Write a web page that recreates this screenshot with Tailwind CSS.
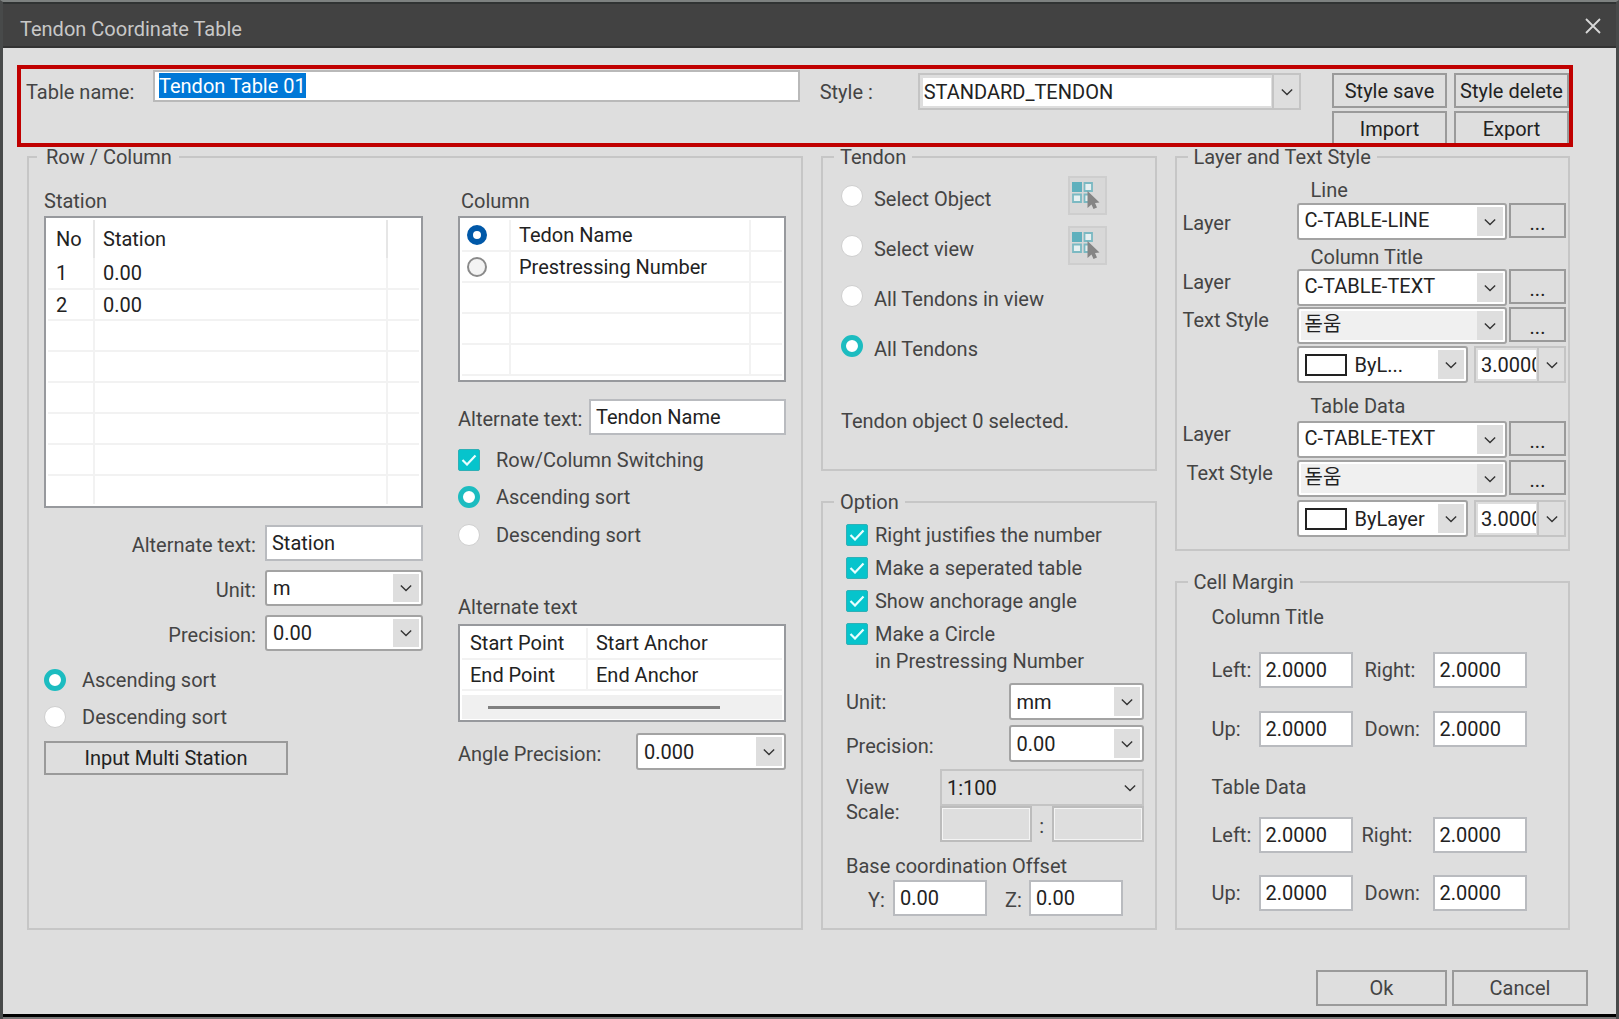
<!DOCTYPE html>
<html lang="en">
<head>
    <meta charset="UTF-8">
    <meta name="viewport" content="width=device-width, initial-scale=1.0">
    <title>Tendon Coordinate Table</title>
    <script src="https://cdn.jsdelivr.net/npm/@tailwindcss/browser@4"></script>
    <style>
        body { font-family: Roboto, 'Noto Sans CJK KR', sans-serif; }
        table { border-collapse: collapse; }
    </style>
</head>
<body class="bg-[#dedede] text-[20px] leading-6 text-[#444]">
    <svg class="hidden">
        <symbol id="chevron" viewBox="0 0 14 8"><path d="M1 1l6 6 6-6" fill="none" stroke="#333" stroke-width="1.6"/></symbol>
        <symbol id="check" viewBox="0 0 16 12"><path d="M1.5 6l4.5 4.5L14.5 1.5" fill="none" stroke="#e8ffff" stroke-width="2.2"/></symbol>
        <symbol id="pick" viewBox="0 0 30 30">
            <rect x="0" y="1" width="10" height="10" fill="#5fb0bd"/>
            <path d="M12.500 2h7.500v8h-7.500zM1 13.500h8v7.500H1zM16 13.500h-3.500v7.500h4" fill="#e6f0f1" stroke="#7bb9c2" stroke-width="1.8"/>
            <path d="M15.500 10v17l4-3.500 2 4.500 3.500-1.500-2-4.500 4.500-.5z" fill="#858585"/>
        </symbol>
    </svg>

    <div class="min-h-screen flex flex-col border-x-3 border-t-2 border-x-[#484a4a] border-t-[#7d8180]">
        <!-- Title bar -->
        <header class="h-[46px] shrink-0 flex items-center justify-between bg-[#424242] border-y-2 border-t-[#303333] border-b-[#333] pl-[17px] pr-[15px] pt-2">
            <h1 class="text-[#c8c8c8]">Tendon Coordinate Table</h1>
            <button aria-label="Close" class="-mt-1.5">
                <svg class="size-4" viewBox="0 0 16 16"><path d="M1 1l14 14M15 1L1 15" stroke="#d8d8d8" stroke-width="1.8"/></svg>
            </button>
        </header>

        <main class="flex-1 pt-[17px] pl-[14px] pr-[28px] border-b-3 border-black">
            <!-- Table name and style -->
            <section class="mr-[15px] h-[82px] overflow-hidden border-4 border-[#c00000] flex items-start pl-[5px] pt-px">
                <label for="tableName" class="w-[127px] pt-[10px]">Table name:</label>
                <div class="flex-638 h-8 bg-white border-2 border-[#b9b9b9] flex items-start pl-1">
                    <input id="tableName" value="Tendon Table 01" class="field-sizing-content h-[25px] mt-px bg-[#0078d7] text-white outline-none">
                </div>
                <label for="style" class="w-[118px] pl-5 pt-[10px]">Style :</label>
                <div class="relative flex-348 h-[37px] mt-[3px] border-2 border-[#c4c4c4] p-[3px] pr-[28px]">
                    <select id="style" class="appearance-none block w-full h-[28px] bg-white text-[#222] pl-px"><option>STANDARD_TENDON</option></select>
                    <span class="absolute right-0 inset-y-0 w-[27px] border-l-2 border-[#c4c4c4] grid place-items-center pointer-events-none"><svg class="w-3 h-2"><use href="#chevron"/></svg></span>
                </div>
                <div class="ml-[31px] mt-[3px] grid grid-cols-[115px_115px] gap-x-[7px] gap-y-[3px] text-[#222] whitespace-nowrap">
                    <button class="h-[35px] border-2 border-[#9a9a9a]">Style save</button>
                    <button class="h-[35px] border-2 border-[#9a9a9a]">Style delete</button>
                    <button class="h-[35px] border-2 border-[#9a9a9a]">Import</button>
                    <button class="h-[35px] border-2 border-[#9a9a9a]">Export</button>
                </div>
            </section>

            <div class="ml-[10px] mr-[18px] grid grid-cols-[minmax(0,777fr)_minmax(0,336fr)_minmax(0,396fr)] gap-[18px]">
                <!-- Row / Column -->
                <fieldset class="min-w-0 border-2 border-[#c6c6c6] px-[15px] grid grid-cols-[minmax(0,379fr)_minmax(0,328fr)] gap-[35px]">
                    <legend class="-ml-[7px] pl-[9px] pr-[7px] leading-5">Row / Column</legend>
                    <div class="pt-[22px]">
                        <h2>Station</h2>
                        <div class="mt-[3px] h-[292px] bg-white border-2 border-[#97999d] p-[2px] overflow-hidden text-[#222]">
                            <table class="w-full table-fixed text-left">
                                <colgroup><col class="w-[46px]"><col><col class="w-[32px]"></colgroup>
                                <tr class="h-[38px]"><th class="font-normal pl-2 border-r-2 border-[#e6e6e6]">No</th><th class="font-normal pl-2 border-r-2 border-[#e6e6e6]">Station</th><th></th></tr>
                                <tr class="h-[31px] border-b-2 border-[#f2f2f2]"><td class="pl-2 border-r-2 border-[#f2f2f2]">1</td><td class="pl-2 border-r-2 border-[#f2f2f2]">0.00</td><td></td></tr>
                                <tr class="h-[31px] border-b-2 border-[#f2f2f2]"><td class="pl-2 border-r-2 border-[#f2f2f2]">2</td><td class="pl-2 border-r-2 border-[#f2f2f2]">0.00</td><td></td></tr>
                                <tr class="h-[31px] border-b-2 border-[#f2f2f2]"><td class="border-r-2 border-[#f2f2f2]"></td><td class="border-r-2 border-[#f2f2f2]"></td><td></td></tr>
                                <tr class="h-[31px] border-b-2 border-[#f2f2f2]"><td class="border-r-2 border-[#f2f2f2]"></td><td class="border-r-2 border-[#f2f2f2]"></td><td></td></tr>
                                <tr class="h-[31px] border-b-2 border-[#f2f2f2]"><td class="border-r-2 border-[#f2f2f2]"></td><td class="border-r-2 border-[#f2f2f2]"></td><td></td></tr>
                                <tr class="h-[31px] border-b-2 border-[#f2f2f2]"><td class="border-r-2 border-[#f2f2f2]"></td><td class="border-r-2 border-[#f2f2f2]"></td><td></td></tr>
                                <tr class="h-[31px] border-b-2 border-[#f2f2f2]"><td class="border-r-2 border-[#f2f2f2]"></td><td class="border-r-2 border-[#f2f2f2]"></td><td></td></tr>
                                <tr class="h-[29px]"><td class="border-r-2 border-[#f2f2f2]"></td><td class="border-r-2 border-[#f2f2f2]"></td><td></td></tr>
                            </table>
                        </div>
                        <div class="mt-[17px] grid grid-cols-[1fr_158px] gap-x-[9px] gap-y-[9px] items-center">
                            <label for="stationAlt" class="text-right pt-1">Alternate text:</label>
                            <input id="stationAlt" value="Station" class="w-full h-9 bg-white border-2 border-[#b9bbbf] px-[5px] text-[#222]">
                            <label for="stationUnit" class="text-right pt-1">Unit:</label>
                            <div class="relative">
                                <select id="stationUnit" class="appearance-none block w-full h-9 bg-white border-2 border-[#a3a3a3] rounded-[3px] pl-[6px] text-[#222]"><option>m</option></select>
                                <span class="absolute right-1 inset-y-1 w-[26px] bg-[#dedede] grid place-items-center pointer-events-none"><svg class="w-3 h-2"><use href="#chevron"/></svg></span>
                            </div>
                            <label for="stationPrecision" class="text-right pt-1">Precision:</label>
                            <div class="relative">
                                <select id="stationPrecision" class="appearance-none block w-full h-9 bg-white border-2 border-[#a3a3a3] rounded-[3px] pl-[6px] text-[#222]"><option>0.00</option></select>
                                <span class="absolute right-1 inset-y-1 w-[26px] bg-[#dedede] grid place-items-center pointer-events-none"><svg class="w-3 h-2"><use href="#chevron"/></svg></span>
                            </div>
                        </div>
                        <label class="mt-[17px] flex items-center gap-4"><input type="radio" name="rowSort" checked class="appearance-none size-[22px] rounded-full bg-white border border-[#cfcfcf] checked:border-5 checked:border-[#1cbcc0]">Ascending sort</label>
                        <label class="mt-[13px] flex items-center gap-4"><input type="radio" name="rowSort" class="appearance-none size-[22px] rounded-full bg-white border border-[#cfcfcf] checked:border-5 checked:border-[#1cbcc0]">Descending sort</label>
                        <button class="mt-3 w-[244px] h-[34px] border-2 border-[#9a9a9a] text-[#222]">Input Multi Station</button>
                    </div>

                    <div class="pt-[22px]">
                        <h2 class="pl-[3px]">Column</h2>
                        <div class="mt-[3px] h-[166px] bg-white border-2 border-[#97999d] p-[2px] overflow-hidden text-[#222]">
                            <table class="w-full table-fixed">
                                <colgroup><col class="w-[48px]"><col><col class="w-[32px]"></colgroup>
                                <tr class="h-[31px] border-b-2 border-[#f2f2f2]"><td class="pl-[5px] border-r-2 border-[#f2f2f2]"><input type="radio" name="column" id="colName" checked class="appearance-none block size-5 rounded-full bg-white border-2 border-[#8a8a8a] checked:border-6 checked:border-[#0058a8]"></td><td class="pl-2 border-r-2 border-[#f2f2f2]"><label for="colName">Tedon Name</label></td><td></td></tr>
                                <tr class="h-[31px] border-b-2 border-[#f2f2f2]"><td class="pl-[5px] border-r-2 border-[#f2f2f2]"><input type="radio" name="column" id="colNumber" class="appearance-none block size-5 rounded-full bg-[#f3f3f3] border-2 border-[#8a8a8a] checked:border-6 checked:border-[#0058a8]"></td><td class="pl-2 border-r-2 border-[#f2f2f2]"><label for="colNumber">Prestressing Number</label></td><td></td></tr>
                                <tr class="h-[31px] border-b-2 border-[#f2f2f2]"><td class="border-r-2 border-[#f2f2f2]"></td><td class="border-r-2 border-[#f2f2f2]"></td><td></td></tr>
                                <tr class="h-[31px] border-b-2 border-[#f2f2f2]"><td class="border-r-2 border-[#f2f2f2]"></td><td class="border-r-2 border-[#f2f2f2]"></td><td></td></tr>
                                <tr class="h-[31px] border-b-2 border-[#f2f2f2]"><td class="border-r-2 border-[#f2f2f2]"></td><td class="border-r-2 border-[#f2f2f2]"></td><td></td></tr>
                            </table>
                        </div>
                        <div class="mt-[17px] flex items-center">
                            <label for="columnAlt" class="w-[131px] shrink-0 pt-1">Alternate text:</label>
                            <input id="columnAlt" value="Tendon Name" class="flex-1 min-w-0 h-9 bg-white border-2 border-[#b9bbbf] px-[5px] text-[#222]">
                        </div>
                        <label class="mt-[13px] flex items-center gap-4">
                            <span class="grid place-items-center"><input type="checkbox" checked class="[grid-area:1/1] appearance-none size-[22px] rounded-[2px] bg-[#06c4cc] border border-[#2fb0b6]"><svg class="[grid-area:1/1] w-4 h-3"><use href="#check"/></svg></span>Row/Column Switching
                        </label>
                        <label class="mt-[13px] flex items-center gap-4"><input type="radio" name="colSort" checked class="appearance-none size-[22px] rounded-full bg-white border border-[#cfcfcf] checked:border-5 checked:border-[#1cbcc0]">Ascending sort</label>
                        <label class="mt-[14px] flex items-center gap-4"><input type="radio" name="colSort" class="appearance-none size-[22px] rounded-full bg-white border border-[#cfcfcf] checked:border-5 checked:border-[#1cbcc0]">Descending sort</label>
                        <h2 class="mt-12">Alternate text</h2>
                        <div class="mt-[5px] h-[98px] bg-white border-2 border-[#97999d] p-[2px] text-[#222]">
                            <table class="w-full table-fixed">
                                <colgroup><col class="w-[125px]"><col></colgroup>
                                <tr class="h-[31px] border-b-2 border-[#f2f2f2]"><td class="pl-2 border-r-2 border-[#f2f2f2]">Start Point</td><td class="pl-2">Start Anchor</td></tr>
                                <tr class="h-[31px] border-b-2 border-[#f2f2f2]"><td class="pl-2 border-r-2 border-[#f2f2f2]">End Point</td><td class="pl-2">End Anchor</td></tr>
                            </table>
                            <div class="mt-1 h-6 bg-[#f0f0f0] flex items-center pl-[26px]"><div class="w-[232px] h-[3px] bg-[#808080]"></div></div>
                        </div>
                        <div class="mt-[11px] flex items-center justify-between">
                            <label for="anglePrecision" class="pt-1">Angle Precision:</label>
                            <div class="relative w-[150px]">
                                <select id="anglePrecision" class="appearance-none block w-full h-[37px] bg-white border-2 border-[#a3a3a3] rounded-[3px] pl-[6px] text-[#222]"><option>0.000</option></select>
                                <span class="absolute right-1 inset-y-1 w-[26px] bg-[#dedede] grid place-items-center pointer-events-none"><svg class="w-3 h-2"><use href="#chevron"/></svg></span>
                            </div>
                        </div>
                    </div>
                </fieldset>

                <div class="flex flex-col gap-[21px]">
                    <!-- Tendon -->
                    <fieldset class="min-w-0 border-2 border-[#c6c6c6] pl-[18px] pr-[48px] pt-[9px] pb-9">
                        <legend class="-ml-[7px] px-[6px] leading-5">Tendon</legend>
                        <div class="grid auto-rows-[39px] gap-[11px]">
                            <div class="flex items-center justify-between">
                                <label class="flex items-center gap-[11px]"><input type="radio" name="target" class="appearance-none size-[22px] rounded-full bg-white border border-[#cfcfcf] checked:border-5 checked:border-[#1cbcc0]"><span class="pt-[6px]">Select Object</span></label>
                                <button aria-label="Pick objects" class="size-[39px] bg-[#d8d8d8] border-2 border-[#cecece] grid place-items-center"><svg class="size-[30px]"><use href="#pick"/></svg></button>
                            </div>
                            <div class="flex items-center justify-between">
                                <label class="flex items-center gap-[11px]"><input type="radio" name="target" class="appearance-none size-[22px] rounded-full bg-white border border-[#cfcfcf] checked:border-5 checked:border-[#1cbcc0]"><span class="pt-[6px]">Select view</span></label>
                                <button aria-label="Pick view" class="size-[39px] bg-[#d8d8d8] border-2 border-[#cecece] grid place-items-center"><svg class="size-[30px]"><use href="#pick"/></svg></button>
                            </div>
                            <label class="flex items-center gap-[11px]"><input type="radio" name="target" class="appearance-none size-[22px] rounded-full bg-white border border-[#cfcfcf] checked:border-5 checked:border-[#1cbcc0]"><span class="pt-[6px]">All Tendons in view</span></label>
                            <label class="flex items-center gap-[11px]"><input type="radio" name="target" checked class="appearance-none size-[22px] rounded-full bg-white border border-[#cfcfcf] checked:border-5 checked:border-[#1cbcc0]"><span class="pt-[6px]">All Tendons</span></label>
                        </div>
                        <p class="mt-11 whitespace-nowrap">Tendon object 0 selected.</p>
                    </fieldset>

                    <!-- Option -->
                    <fieldset class="min-w-0 flex-1 border-2 border-[#c6c6c6] pl-[23px] pr-[11px] pt-[11px] pb-3">
                        <legend class="-ml-3 px-[6px] leading-5">Option</legend>
                        <div class="grid auto-rows-[23px] gap-[10px]">
                            <label class="flex items-center gap-[7px]"><span class="grid place-items-center"><input type="checkbox" checked class="[grid-area:1/1] appearance-none size-[22px] rounded-[2px] bg-[#06c4cc] border border-[#2fb0b6]"><svg class="[grid-area:1/1] w-4 h-3"><use href="#check"/></svg></span>Right justifies the number</label>
                            <label class="flex items-center gap-[7px]"><span class="grid place-items-center"><input type="checkbox" checked class="[grid-area:1/1] appearance-none size-[22px] rounded-[2px] bg-[#06c4cc] border border-[#2fb0b6]"><svg class="[grid-area:1/1] w-4 h-3"><use href="#check"/></svg></span>Make a seperated table</label>
                            <label class="flex items-center gap-[7px]"><span class="grid place-items-center"><input type="checkbox" checked class="[grid-area:1/1] appearance-none size-[22px] rounded-[2px] bg-[#06c4cc] border border-[#2fb0b6]"><svg class="[grid-area:1/1] w-4 h-3"><use href="#check"/></svg></span>Show anchorage angle</label>
                            <label class="flex items-center gap-[7px]"><span class="grid place-items-center"><input id="circle" type="checkbox" checked class="[grid-area:1/1] appearance-none size-[22px] rounded-[2px] bg-[#06c4cc] border border-[#2fb0b6]"><svg class="[grid-area:1/1] w-4 h-3"><use href="#check"/></svg></span>Make a Circle</label>
                        </div>
                        <label for="circle" class="block mt-1 pl-[29px]">in Prestressing Number</label>
                        <div class="mt-[10px] flex items-center justify-between">
                            <label for="optUnit">Unit:</label>
                            <div class="relative w-[135px]">
                                <select id="optUnit" class="appearance-none block w-full h-[37px] bg-white border-2 border-[#a3a3a3] rounded-[3px] pl-[6px] text-[#222]"><option>mm</option></select>
                                <span class="absolute right-1 inset-y-1 w-[26px] bg-[#dedede] grid place-items-center pointer-events-none"><svg class="w-3 h-2"><use href="#chevron"/></svg></span>
                            </div>
                        </div>
                        <div class="mt-[5px] flex items-center justify-between">
                            <label for="optPrecision" class="pt-1">Precision:</label>
                            <div class="relative w-[135px]">
                                <select id="optPrecision" class="appearance-none block w-full h-[37px] bg-white border-2 border-[#a3a3a3] rounded-[3px] pl-[6px] text-[#222]"><option>0.00</option></select>
                                <span class="absolute right-1 inset-y-1 w-[26px] bg-[#dedede] grid place-items-center pointer-events-none"><svg class="w-3 h-2"><use href="#chevron"/></svg></span>
                            </div>
                        </div>
                        <div class="mt-[7px] flex">
                            <label for="viewScale" class="w-[94px] pt-[6px] leading-[25px]">View<br>Scale:</label>
                            <div class="flex-1 min-w-0">
                                <div class="relative">
                                    <select id="viewScale" class="appearance-none block w-full h-[37px] border-2 border-[#c4c4c4] pl-[5px] text-[#222]"><option>1:100</option></select>
                                    <span class="absolute right-2 inset-y-0 grid place-items-center pointer-events-none"><svg class="w-3 h-2"><use href="#chevron"/></svg></span>
                                </div>
                                <div class="flex items-center">
                                    <input aria-label="Scale numerator" class="flex-1 min-w-0 h-9 border-2 border-[#bcbcbc] shadow-[inset_0_0_0_1px_#f4f4f4]">
                                    <span class="w-5 text-center pt-1">:</span>
                                    <input aria-label="Scale denominator" class="flex-1 min-w-0 h-9 border-2 border-[#bcbcbc] shadow-[inset_0_0_0_1px_#f4f4f4]">
                                </div>
                            </div>
                        </div>
                        <p class="mt-3">Base coordination Offset</p>
                        <div class="mt-[2px] pl-[22px] flex items-center">
                            <label for="offY" class="w-[25px] pt-1">Y:</label>
                            <input id="offY" value="0.00" class="w-[94px] h-9 bg-white border-2 border-[#b9bbbf] px-[5px] text-[#222]">
                            <label for="offZ" class="w-[42px] pl-[18px] pt-1">Z:</label>
                            <input id="offZ" value="0.00" class="w-[94px] h-9 bg-white border-2 border-[#b9bbbf] px-[5px] text-[#222]">
                        </div>
                    </fieldset>
                </div>

                <div class="flex flex-col gap-[21px]">
                    <!-- Layer and Text Style -->
                    <fieldset class="min-w-0 border-2 border-[#c6c6c6] pl-[6px] pr-[2px] pt-[11px] pb-3">
                        <legend class="ml-[5px] px-[6px] leading-5">Layer and Text Style</legend>
                        <h3 class="pl-[128px]">Line</h3>
                        <div class="mt-px flex gap-[2px]">
                            <label for="lineLayer" class="w-[112px] pt-2">Layer</label>
                            <div class="relative flex-1">
                                <select id="lineLayer" class="appearance-none block w-full h-[37px] bg-white border-2 border-[#a3a3a3] rounded-[3px] pl-[6px] pb-1 text-[#222]"><option>C-TABLE-LINE</option></select>
                                <span class="absolute right-1 inset-y-1 w-[26px] bg-[#dedede] grid place-items-center pointer-events-none"><svg class="w-3 h-2"><use href="#chevron"/></svg></span>
                            </div>
                            <button class="w-[57px] h-[35px] border-2 border-[#9a9a9a] text-[#222] pt-1">...</button>
                        </div>
                        <h3 class="mt-[5px] pl-[128px]">Column Title</h3>
                        <div class="flex gap-[2px]">
                            <label for="titleLayer" class="w-[112px] pt-px">Layer</label>
                            <div class="relative flex-1">
                                <select id="titleLayer" class="appearance-none block w-full h-[37px] bg-white border-2 border-[#a3a3a3] rounded-[3px] pl-[6px] pb-1 text-[#222]"><option>C-TABLE-TEXT</option></select>
                                <span class="absolute right-1 inset-y-1 w-[26px] bg-[#dedede] grid place-items-center pointer-events-none"><svg class="w-3 h-2"><use href="#chevron"/></svg></span>
                            </div>
                            <button class="w-[57px] h-[35px] border-2 border-[#9a9a9a] text-[#222] pt-1">...</button>
                        </div>
                        <div class="mt-px flex gap-[2px]">
                            <label for="titleStyle" class="w-[112px] pt-px">Text Style</label>
                            <div class="relative flex-1">
                                <select id="titleStyle" class="appearance-none block w-full h-[37px] bg-[#f0f0f0] border-2 border-[#a3a3a3] rounded-[3px] pl-[6px] pb-1 text-[#222] shadow-[inset_0_0_0_2px_white]"><option>돋움</option></select>
                                <span class="absolute right-1 inset-y-1 w-[26px] bg-[#dedede] grid place-items-center pointer-events-none"><svg class="w-3 h-2"><use href="#chevron"/></svg></span>
                            </div>
                            <button class="w-[57px] h-[35px] border-2 border-[#9a9a9a] text-[#222] pt-1">...</button>
                        </div>
                        <div class="mt-[2px] pl-[114px] flex gap-[6px]">
                            <div class="relative flex-1">
                                <select aria-label="Column title colour" class="appearance-none block w-full h-[37px] bg-white border-2 border-[#a3a3a3] rounded-[3px] pl-[56px] text-[#222]"><option>ByL...</option></select>
                                <span class="absolute left-2 top-2 w-[42px] h-[22px] border-2 border-[#222] pointer-events-none"></span>
                                <span class="absolute right-1 inset-y-1 w-[26px] bg-[#dedede] grid place-items-center pointer-events-none"><svg class="w-3 h-2"><use href="#chevron"/></svg></span>
                            </div>
                            <div class="relative w-[92px] border-2 border-[#c4c4c4] p-[2px] pr-[28px]">
                                <input aria-label="Column title height" value="3.0000" class="block w-full h-[29px] bg-white pl-[3px] text-[#222]">
                                <span class="absolute right-0 inset-y-0 w-[27px] border-l-2 border-[#c4c4c4] grid place-items-center pointer-events-none"><svg class="w-3 h-2"><use href="#chevron"/></svg></span>
                            </div>
                        </div>
                        <h3 class="mt-[11px] pl-[128px]">Table Data</h3>
                        <div class="mt-[3px] flex gap-[2px]">
                            <label for="dataLayer" class="w-[112px] pt-px">Layer</label>
                            <div class="relative flex-1">
                                <select id="dataLayer" class="appearance-none block w-full h-[37px] bg-white border-2 border-[#a3a3a3] rounded-[3px] pl-[6px] pb-1 text-[#222]"><option>C-TABLE-TEXT</option></select>
                                <span class="absolute right-1 inset-y-1 w-[26px] bg-[#dedede] grid place-items-center pointer-events-none"><svg class="w-3 h-2"><use href="#chevron"/></svg></span>
                            </div>
                            <button class="w-[57px] h-[35px] border-2 border-[#9a9a9a] text-[#222] pt-1">...</button>
                        </div>
                        <div class="mt-[2px] flex gap-[2px]">
                            <label for="dataStyle" class="w-[112px] pl-1 pt-px">Text Style</label>
                            <div class="relative flex-1">
                                <select id="dataStyle" class="appearance-none block w-full h-[37px] bg-[#f0f0f0] border-2 border-[#a3a3a3] rounded-[3px] pl-[6px] pb-1 text-[#222] shadow-[inset_0_0_0_2px_white]"><option>돋움</option></select>
                                <span class="absolute right-1 inset-y-1 w-[26px] bg-[#dedede] grid place-items-center pointer-events-none"><svg class="w-3 h-2"><use href="#chevron"/></svg></span>
                            </div>
                            <button class="w-[57px] h-[35px] border-2 border-[#9a9a9a] text-[#222] pt-1">...</button>
                        </div>
                        <div class="mt-[3px] pl-[114px] flex gap-[6px]">
                            <div class="relative flex-1">
                                <select aria-label="Table data colour" class="appearance-none block w-full h-[37px] bg-white border-2 border-[#a3a3a3] rounded-[3px] pl-[56px] text-[#222]"><option>ByLayer</option></select>
                                <span class="absolute left-2 top-2 w-[42px] h-[22px] border-2 border-[#222] pointer-events-none"></span>
                                <span class="absolute right-1 inset-y-1 w-[26px] bg-[#dedede] grid place-items-center pointer-events-none"><svg class="w-3 h-2"><use href="#chevron"/></svg></span>
                            </div>
                            <div class="relative w-[92px] border-2 border-[#c4c4c4] p-[2px] pr-[28px]">
                                <input aria-label="Table data height" value="3.0000" class="block w-full h-[29px] bg-white pl-[3px] text-[#222]">
                                <span class="absolute right-0 inset-y-0 w-[27px] border-l-2 border-[#c4c4c4] grid place-items-center pointer-events-none"><svg class="w-3 h-2"><use href="#chevron"/></svg></span>
                            </div>
                        </div>
                    </fieldset>

                    <!-- Cell Margin -->
                    <fieldset class="min-w-0 flex-1 border-2 border-[#c6c6c6] pl-[35px] pt-[13px] pb-4">
                        <legend class="-ml-6 px-[6px] leading-5">Cell Margin</legend>
                        <h3>Column Title</h3>
                        <div class="mt-[23px] grid grid-cols-[47px_94px_80px_94px] gap-y-[23px] items-center">
                            <label for="ctLeft">Left:</label>
                            <input id="ctLeft" value="2.0000" class="h-9 bg-white border-2 border-[#b9bbbf] px-[5px] text-[#222]">
                            <label for="ctRight" class="pl-3">Right:</label>
                            <input id="ctRight" value="2.0000" class="h-9 bg-white border-2 border-[#b9bbbf] px-[5px] text-[#222]">
                            <label for="ctUp">Up:</label>
                            <input id="ctUp" value="2.0000" class="h-9 bg-white border-2 border-[#b9bbbf] px-[5px] text-[#222]">
                            <label for="ctDown" class="pl-3">Down:</label>
                            <input id="ctDown" value="2.0000" class="h-9 bg-white border-2 border-[#b9bbbf] px-[5px] text-[#222]">
                        </div>
                        <h3 class="mt-7">Table Data</h3>
                        <div class="mt-[18px] grid grid-cols-[47px_94px_80px_94px] gap-y-[22px] items-center">
                            <label for="tdLeft">Left:</label>
                            <input id="tdLeft" value="2.0000" class="h-9 bg-white border-2 border-[#b9bbbf] px-[5px] text-[#222]">
                            <label for="tdRight" class="pl-[9px]">Right:</label>
                            <input id="tdRight" value="2.0000" class="h-9 bg-white border-2 border-[#b9bbbf] px-[5px] text-[#222]">
                            <label for="tdUp">Up:</label>
                            <input id="tdUp" value="2.0000" class="h-9 bg-white border-2 border-[#b9bbbf] px-[5px] text-[#222]">
                            <label for="tdDown" class="pl-3">Down:</label>
                            <input id="tdDown" value="2.0000" class="h-9 bg-white border-2 border-[#b9bbbf] px-[5px] text-[#222]">
                        </div>
                    </fieldset>
                </div>
            </div>

            <div class="mt-10 flex justify-end gap-[5px]">
                <button class="w-[131px] h-9 border-2 border-[#9a9a9a]">Ok</button>
                <button class="w-[136px] h-9 border-2 border-[#9a9a9a]">Cancel</button>
            </div>
        </main>
        <div class="h-[2px] bg-[#777]"></div>
    </div>
</body>
</html>
